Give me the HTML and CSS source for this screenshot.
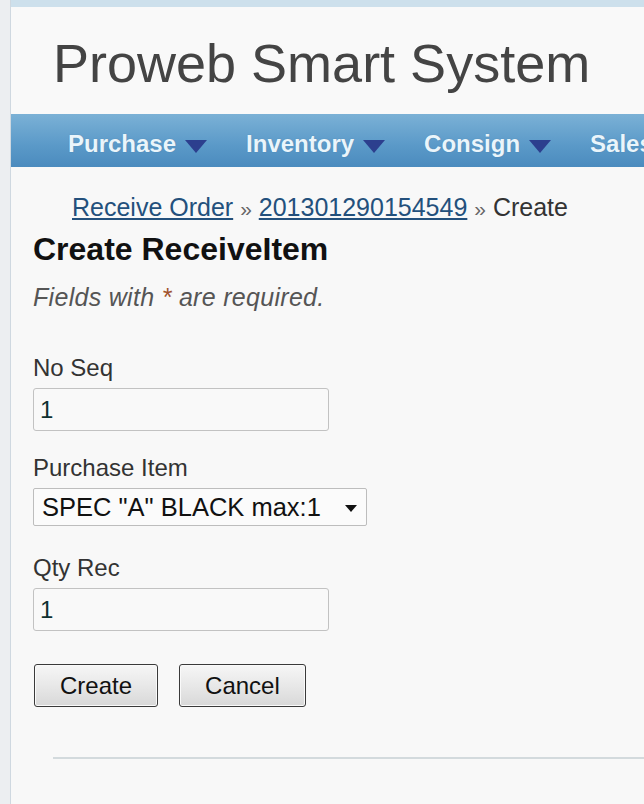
FILE: index.html
```html
<!DOCTYPE html>
<html>
<head>
<meta charset="utf-8">
<link rel="stylesheet" href="styles.css">
</head>
<body>
<div class="page">
  <div class="side-strip"></div>
  <div class="main">
    <header class="header">
      <div class="site-title">Proweb Smart System</div>
    </header>
    <nav class="mainmenu">
      <div class="menu-item"><span>Purchase</span><i class="tri"></i></div>
      <div class="menu-item"><span>Inventory</span><i class="tri"></i></div>
      <div class="menu-item"><span>Consign</span><i class="tri"></i></div>
      <div class="menu-item"><span>Sales</span><i class="tri"></i></div>
    </nav>
    <div class="content">
      <div class="breadcrumbs">
        <a href="#">Receive Order</a> <span class="sep">»</span> <a href="#">201301290154549</a> <span class="sep">»</span> <span class="current">Create</span>
      </div>
      <h1 class="title">Create ReceiveItem</h1>
      <p class="note">Fields with <span class="req">*</span> are required.</p>
      <form class="form">
        <div class="row">
          <label class="lbl">No Seq</label>
          <input class="field" type="text" value="1">
        </div>
        <div class="row">
          <label class="lbl">Purchase Item</label>
          <div class="select-wrap">
            <select class="select"><option>SPEC "A" BLACK max:1</option></select>
            <i class="caret"></i>
          </div>
        </div>
        <div class="row">
          <label class="lbl">Qty Rec</label>
          <input class="field" type="text" value="1">
        </div>
        <div class="buttons">
          <button type="button" class="btn">Create</button>
          <button type="button" class="btn">Cancel</button>
        </div>
      </form>
    </div>
    <div class="footer-line"></div>
  </div>
</div>
</body>
</html>
```
FILE: styles.css
```css
html, body {
  margin: 0;
  padding: 0;
  height: 100%;
}
body {
  font-family: "Liberation Sans", Arial, sans-serif;
  background: #f8f8f8;
  overflow: hidden;
}
.page {
  display: flex;
  min-height: 804px;
}
.side-strip {
  width: 10px;
  background: #eceef1;
  border-right: 1px solid #cfd8e0;
  flex: none;
}
.main {
  flex: 1;
  min-width: 0;
  background: #f8f8f8;
  border-top: 7px solid #cde0ec;
}
.header {
  height: 107px;
  box-sizing: border-box;
  padding: 29px 0 0 42px;
  background: #f9f9f9;
}
.site-title {
  font-size: 54px;
  line-height: 54px;
  color: #444;
  white-space: nowrap;
}
.mainmenu {
  height: 53px;
  box-sizing: border-box;
  padding: 18px 0 0 57px;
  background: linear-gradient(#7bb1d6, #5a99c8 60%, #4b8bbe);
  display: flex;
  gap: 39px;
  white-space: nowrap;
  overflow: hidden;
}
.menu-item {
  display: flex;
  align-items: center;
  height: 24px;
  font-size: 24px;
  line-height: 24px;
  font-weight: bold;
  color: #eaf5fb;
  text-shadow: 0 0 1px rgba(40, 80, 120, 0.4);
}
.tri {
  display: block;
  width: 0;
  height: 0;
  margin-left: 9px;
  margin-top: 4px;
  border-left: 11px solid transparent;
  border-right: 11px solid transparent;
  border-top: 13px solid #2c3f8e;
}
.content {
  padding: 26px 0 0 22px;
}
.breadcrumbs {
  font-size: 25px;
  line-height: 28px;
  padding-left: 39px;
  color: #333;
}
.breadcrumbs a {
  color: #23507c;
  text-decoration: underline;
}
.breadcrumbs .sep {
  color: #666;
  font-size: 21px;
}
.title {
  margin: 8px 0 0;
  font-size: 32px;
  line-height: 36px;
  font-weight: bold;
  color: #111;
}
.note {
  margin: 16px 0 0;
  font-size: 25px;
  line-height: 28px;
  letter-spacing: 0.3px;
  font-style: italic;
  color: #555;
}
.req {
  color: #a0522d;
}
.form {
  margin-top: 43px;
}
.row {
  display: flex;
  flex-direction: column;
  align-items: flex-start;
  margin-bottom: 23px;
}
.lbl {
  font-size: 24px;
  line-height: 28px;
  color: #333;
  margin-bottom: 6px;
}
.field {
  width: 296px;
  height: 43px;
  box-sizing: border-box;
  border: 1px solid #c2c2c2;
  border-radius: 3px;
  background: #f9f9f9;
  padding: 0 0 0 6px;
  font-family: "Liberation Sans", Arial, sans-serif;
  font-size: 24px;
  color: #0f3030;
  margin: 0;
}
.select-wrap {
  position: relative;
  margin-bottom: 5px;
}
.select {
  appearance: none;
  -webkit-appearance: none;
  width: 334px;
  height: 38px;
  box-sizing: border-box;
  border: 1px solid #bdbdbd;
  border-radius: 2px;
  background: #fbfbfb;
  padding: 0 0 0 8px;
  font-family: "Liberation Sans", Arial, sans-serif;
  font-size: 25.5px;
  color: #111;
  margin: 0;
  display: block;
}
.caret {
  position: absolute;
  right: 10px;
  top: 17px;
  width: 0;
  height: 0;
  border-left: 6px solid transparent;
  border-right: 6px solid transparent;
  border-top: 7px solid #111;
}
.buttons {
  display: flex;
  gap: 21px;
  margin: 33px 0 0 1px;
}
.btn {
  height: 43px;
  padding: 0 25px;
  font-family: "Liberation Sans", Arial, sans-serif;
  font-size: 24px;
  line-height: 24px;
  color: #111;
  border: 1px solid #3a3a3a;
  border-radius: 3px;
  background: linear-gradient(#f6f6f6, #e8e8e8 50%, #d8d8d8);
  box-shadow: inset 0 0 0 1px #fafafa;
  margin: 0;
}
.footer-line {
  margin: 50px 0 0 42px;
  height: 2px;
  background: #d3dadd;
}
```
